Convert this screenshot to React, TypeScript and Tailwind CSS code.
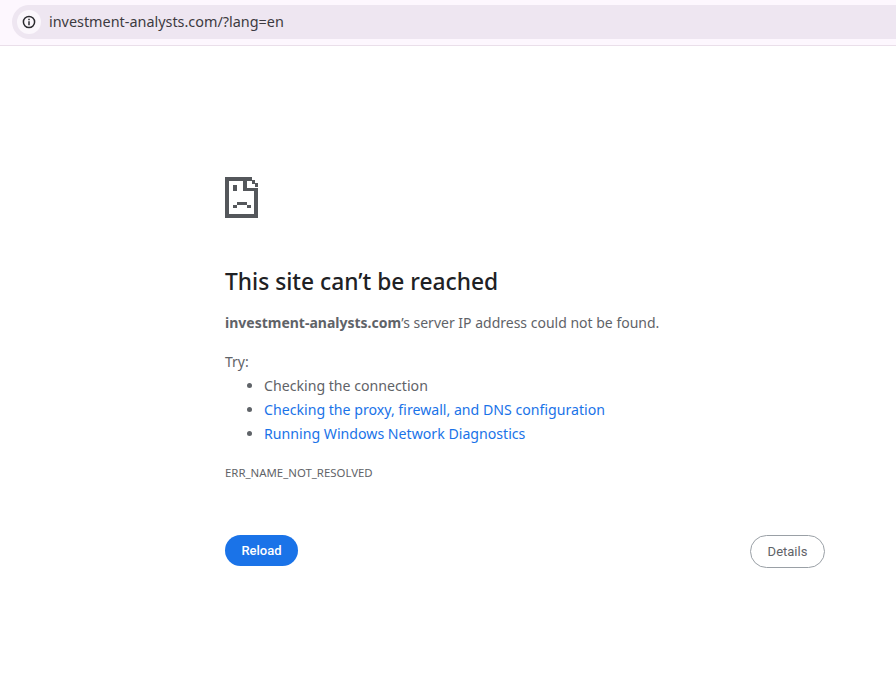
const Pixel = () => (
  <svg width="33" height="41" viewBox="0 0 33 41" className="block" shapeRendering="crispEdges" fill="#54575b">
    <path d="M0 0h27v4H4v33h25V14h4v27H0z" />
    <path d="M18 4h4v7h11v3H18z" />
    <path d="M27 3h3v4h-3zM30 6h3v4h-3z" />
    <path d="M8 8h4v6H8zM12 25h10v3H12zM8 28h4v3H8zM22 28h4v3h-4z" />
  </svg>
);

export default function App() {
  return (
    <div className="w-[896px] h-[685px] bg-white overflow-hidden font-['Noto_Sans',sans-serif]">
      <div className="h-[46px] bg-[#fdf7fe] border-b border-[#eadfea] pt-[5px] pl-3">
        <div className="h-[34px] rounded-l-full bg-[#eee6f1] flex items-center pl-[5px]">
          <div className="w-6 h-6 rounded-full bg-[#fbf7fc] flex items-center justify-center">
            <svg width="14" height="14" viewBox="0 0 14 14" fill="none" stroke="#2b2b2f" strokeWidth="1.5">
              <circle cx="7" cy="7" r="5.6" />
              <path d="M7 6.2v4M7 3.8v1.4" />
            </svg>
          </div>
          <span className="ml-[8px] text-[14.4px] text-[#3c3a40]">investment-analysts.com/?lang=en</span>
        </div>
      </div>
      <div className="pl-[225px] pr-[71px] pt-[131px]">
        <Pixel />
        <h1 className="mt-[48px] text-[22.75px] leading-[32px] font-medium text-[#202124]">This site can’t be reached</h1>
        <p className="mt-[13px] text-[14px] leading-6 text-[#5f6368]"><b className="font-bold">investment-analysts.com</b>’s server IP address could not be found.</p>
        <p className="mt-[15px] text-[14px] leading-6 text-[#5f6368]">Try:</p>
        <ul className="list-disc pl-[39px] text-[14.15px] leading-6 text-[#5f6368]">
          <li>Checking the connection</li>
          <li className="text-[#1a73e8] marker:text-[#5f6368]">Checking the proxy, firewall, and DNS configuration</li>
          <li className="text-[#1a73e8] marker:text-[#5f6368]">Running Windows Network Diagnostics</li>
        </ul>
        <p className="mt-[19px] text-[11.4px] leading-4 text-[#5f6368]">ERR_NAME_NOT_RESOLVED</p>
        <div className="mt-[54px] flex items-start justify-between font-['Roboto',sans-serif]">
          <button className="h-[31px] w-[73px] rounded-full bg-[#1a73e8] text-white text-[13px] font-medium">Reload</button>
          <button className="h-[33px] w-[75px] rounded-full border border-[#9aa0a6] text-[#5f6368] text-[13px]">Details</button>
        </div>
      </div>
    </div>
  );
}
